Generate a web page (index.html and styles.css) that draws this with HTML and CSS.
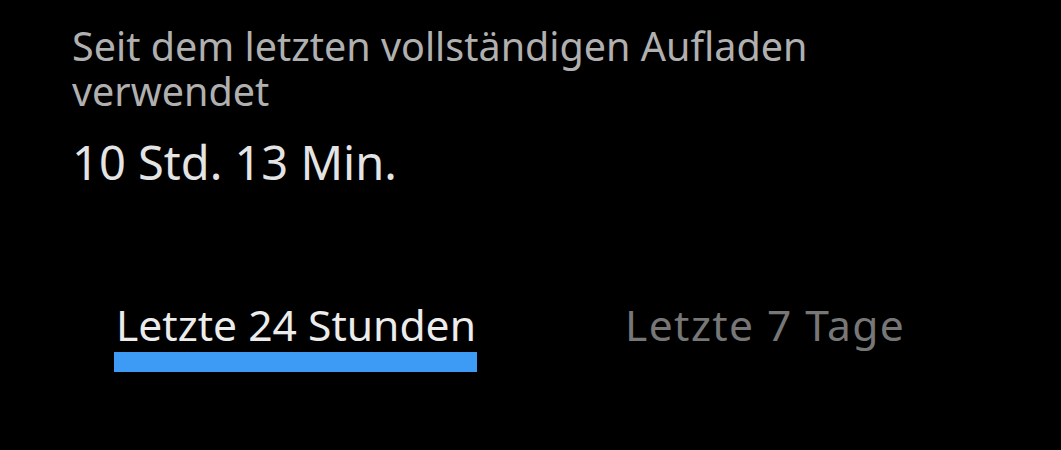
FILE: index.html
```html
<!DOCTYPE html>
<html lang="de">
<head>
  <meta charset="UTF-8" />
  <meta name="viewport" content="width=device-width, initial-scale=1" />
  <title>Akku</title>
  <link rel="stylesheet" href="styles.css">
</head>
<body>
  <div class="usage">
    <p class="usage-label">Seit dem letzten vollständigen Aufladen verwendet</p>
    <p class="usage-time">10 Std. 13 Min.</p>
  </div>

  <div class="tabs">
    <div class="tab active">Letzte 24 Stunden</div>
    <div class="tab">Letzte 7 Tage</div>
  </div>
</body>
</html>
```

FILE: styles.css
```css
body {
  font-family: "Noto Sans", sans-serif;
  background-color: #000;
  margin: 0;
  padding: 0;
  height: 450px;
  overflow: hidden;
}

.usage {
  padding: 24px 72px 0 72px;
  max-width: 780px;
}

.usage-label {
  margin: 0;
  font-size: 39.5px;
  line-height: 45px;
  color: #b0b0b0;
}

.usage-time {
  margin: 20px 0 0 0;
  font-size: 47px;
  line-height: 56px;
  color: #e4e4e4;
}

.tabs {
  display: flex;
  margin-top: 109px;
  padding-left: 114px;
  gap: 146px;
}

.tab {
  font-size: 42.6px;
  line-height: 50px;
  color: #777;
  padding: 0 1px 3px 2px;
  border-bottom: 20px solid transparent;
}

.tab + .tab {
  letter-spacing: 1.4px;
}

.tab.active {
  color: #ececec;
  border-bottom-color: #3d9bf6;
}
```
